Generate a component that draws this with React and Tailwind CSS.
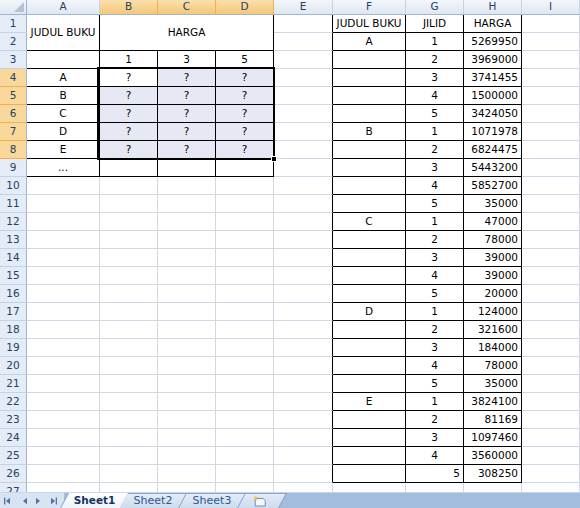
import React from "react";
import clsx from "clsx";

const COLS = ["", "A", "B", "C", "D", "E", "F", "G", "H", "I"];
const ROWS = 27;

// data tabel kanan (F:H)
const harga = [
  ["A", ["5269950", "3969000", "3741455", "1500000", "3424050"]],
  ["B", ["1071978", "6824475", "5443200", "5852700", "35000"]],
  ["C", ["47000", "78000", "39000", "39000", "20000"]],
  ["D", ["124000", "321600", "184000", "78000", "35000"]],
  ["E", ["3824100", "81169", "1097460", "3560000", "308250"]],
];

function buildCells() {
  const cells = {};
  const put = (r, c, text, align = "center") => (cells[`${r}-${c}`] = { text, align });
  // tabel kiri
  put(1, 1, "JUDUL BUKU");
  put(1, 2, "HARGA");
  put(3, 2, "1");
  put(3, 3, "3");
  put(3, 4, "5");
  ["A", "B", "C", "D", "E"].forEach((l, i) => {
    put(4 + i, 1, l);
    put(4 + i, 2, "?");
    put(4 + i, 3, "?");
    put(4 + i, 4, "?");
  });
  put(9, 1, "...");
  // tabel kanan
  put(1, 6, "JUDUL BUKU");
  put(1, 7, "JILID");
  put(1, 8, "HARGA");
  harga.forEach(([l, vals], i) => {
    vals.forEach((v, j) => {
      const r = 2 + i * 5 + j;
      if (j === 0) put(r, 6, l);
      put(r, 7, String(j + 1), r === 26 ? "right" : "center");
      put(r, 8, v, "right");
    });
  });
  return cells;
}

const CELLS = buildCells();

const inLeft = (r, c) => r >= 1 && r <= 9 && c >= 1 && c <= 4;
const inRight = (r, c) => r >= 1 && r <= 26 && c >= 6 && c <= 8;

function rightBlack(r, c) {
  if (inLeft(r, c) || inRight(r, c)) return true;
  if (c === 5 && r >= 1 && r <= 26) return true;
  return false;
}

function bottomBlack(r, c) {
  if (inLeft(r, c) && r >= 2) return true;
  if (inRight(r, c)) return true;
  return false;
}

const isSel = (r, c) => r >= 4 && r <= 8 && c >= 2 && c <= 4;

function Cell({ r, c }) {
  const d = CELLS[`${r}-${c}`];
  const merged = r === 1 && c === 1 ? "row-span-2" : r === 1 && c === 2 ? "col-span-3 row-span-2" : "";
  return (
    <div
      className={clsx(
        "flex items-center overflow-hidden whitespace-nowrap border-r border-b px-[3px] text-black",
        merged,
        rightBlack(r, c) ? "border-r-black" : "border-r-[#d0d7e5]",
        bottomBlack(r, c) || merged ? "border-b-black" : "border-b-[#d0d7e5]",
        isSel(r, c) && !(r === 4 && c === 2) ? "bg-[#e6e9f4]" : "bg-white",
        d?.align === "right" ? "justify-end" : "justify-center"
      )}
    >
      {d?.text}
    </div>
  );
}

function ColHeader({ label, i }) {
  const sel = i >= 2 && i <= 4;
  if (i === 0) {
    return (
      <div className="relative border-r border-b border-r-[#9eb6ce] border-b-[#9eb6ce] bg-gradient-to-b from-[#f3f6fb] to-[#dfe7f2]">
        <svg className="absolute right-[2px] bottom-[2px]" width="10" height="10" viewBox="0 0 10 10">
          <polygon points="10,0 10,10 0,10" fill="#b4c4d8" />
        </svg>
      </div>
    );
  }
  return (
    <div
      className={clsx(
        "flex items-center justify-center border-r border-b border-b-[#9eb6ce] text-[#27415f]",
        sel
          ? "bg-gradient-to-b from-[#fae0ae] to-[#f5c778] border-r-[#f2b24a]"
          : "bg-gradient-to-b from-[#f3f6fb] to-[#dfe7f2] border-r-[#c7d3e2]"
      )}
    >
      {label}
    </div>
  );
}

function RowHeader({ r }) {
  const sel = r >= 4 && r <= 8;
  return (
    <div
      className={clsx(
        "flex items-center justify-center border-r border-b border-r-[#9eb6ce] text-[#27415f]",
        sel ? "bg-[#f9d89c] border-b-[#f2b24a]" : "bg-[#e4ecf7] border-b-[#c5d2e3]"
      )}
    >
      {r}
    </div>
  );
}

function Sheet() {
  const items = [];
  COLS.forEach((l, i) => items.push(<ColHeader key={`h${i}`} label={l} i={i} />));
  for (let r = 1; r <= ROWS; r++) {
    items.push(<RowHeader key={`r${r}`} r={r} />);
    for (let c = 1; c < COLS.length; c++) {
      // sel gabungan A1:A2 dan B1:D2
      if (r === 2 && c <= 4) continue;
      if (r === 1 && (c === 3 || c === 4)) continue;
      items.push(<Cell key={`${r}-${c}`} r={r} c={c} />);
    }
  }
  return (
    <div className="relative h-[492px] overflow-hidden">
      <div className="grid grid-cols-[27px_73px_58px_58px_58px_59px_73px_58px_58px_1fr] grid-rows-[15px] auto-rows-[18px]">
        {items}
      </div>
      {/* seleksi B4:D8 */}
      <div className="absolute left-[97px] top-[67px] w-[178px] h-[93px] border-2 border-black pointer-events-none" />
      <div className="absolute left-[271px] top-[156px] w-[6px] h-[6px] bg-black border border-white" />
    </div>
  );
}

function NavIcon({ dir, bar, className }) {
  return (
    <svg className={className} width="7" height="8" viewBox="0 0 7 8">
      {dir === "left" ? (
        <>
          {bar && <rect x="0" y="0.5" width="1.3" height="7" fill="#4f74ab" />}
          <polygon points="2,4 6,0.8 6,7.2" fill="#4f74ab" />
        </>
      ) : (
        <>
          <polygon points="1,0.8 5,4 1,7.2" fill="#4f74ab" />
          {bar && <rect x="5.7" y="0.5" width="1.3" height="7" fill="#4f74ab" />}
        </>
      )}
    </svg>
  );
}

function Tab({ label, active, w }) {
  return (
    <div
      className={clsx(
        "-skew-x-[28deg] h-full flex items-center justify-center border-l border-[#8aa6cc] -ml-px",
        w,
        active
          ? "bg-gradient-to-b from-white to-[#eef3fa] z-10"
          : "bg-gradient-to-b from-[#e3ecf7] to-[#cddcef] border-t"
      )}
    >
      <span
        className={clsx(
          "skew-x-[28deg]",
          active ? "font-bold text-[10.5px] text-[#17335e]" : "text-[11px] text-[#31568c]"
        )}
      >
        {label}
      </span>
    </div>
  );
}

function TabBar() {
  return (
    <div className="relative h-[16px] flex bg-[#a3bddf] border-t border-[#c4d5ec] overflow-hidden">
      <div className="w-[64px] h-full bg-[#d9e4f3] flex items-center shrink-0">
        <NavIcon dir="left" bar className="ml-[4px]" />
        <NavIcon dir="left" className="ml-[10px]" />
        <NavIcon dir="right" className="ml-[7px]" />
        <NavIcon dir="right" bar className="ml-[8px]" />
      </div>
      <div className="flex h-full ml-[1px]">
        <Tab label="Sheet1" active w="w-[60px]" />
        <Tab label="Sheet2" w="w-[60px]" />
        <Tab label="Sheet3" w="w-[60px]" />
        <div className="-skew-x-[28deg] w-[42px] h-full border-l border-r border-t border-[#8aa6cc] -ml-px bg-gradient-to-b from-[#e3ecf7] to-[#cddcef] flex items-center justify-center">
          <svg className="skew-x-[28deg] -ml-[6px]" width="15" height="12" viewBox="0 0 15 12">
            <path d="M3.5 3.5 H11.5 L13.5 5.5 V11 H3.5 Z" fill="#f4f7fb" stroke="#6f8db8" strokeWidth="1" />
            <path d="M4 0 L4.8 2.2 L7 2.6 L5 3.6 L5.3 6 L4 4.6 L2.6 6 L3 3.6 L1 2.6 L3.2 2.2 Z" fill="#f5c33b" />
          </svg>
        </div>
      </div>
    </div>
  );
}

export default function App() {
  return (
    <div className="w-[580px] h-[508px] overflow-hidden bg-white font-['DejaVu_Sans',sans-serif] text-[10.5px] select-none">
      <Sheet />
      <TabBar />
    </div>
  );
}
